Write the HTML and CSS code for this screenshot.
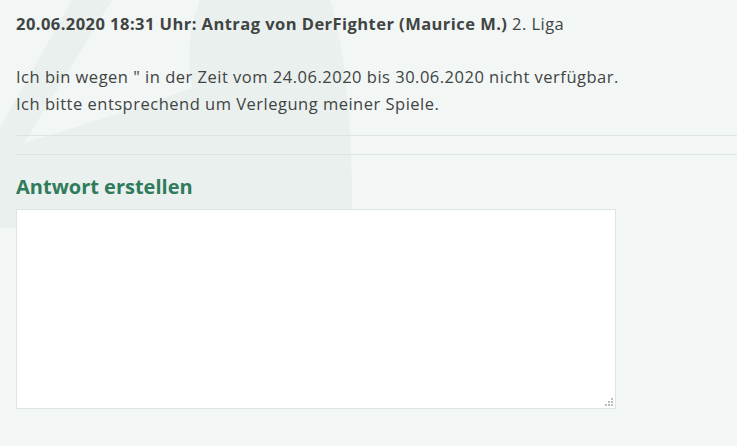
FILE: index.html
```html
<!DOCTYPE html>
<html lang="de">
<head>
<meta charset="utf-8">
<link rel="stylesheet" href="styles.css">
</head>
<body>
<svg class="watermark" width="420" height="300" viewBox="0 0 420 300" aria-hidden="true">
  <path d="M200,0 L330,0 Q352,70 352,212 L0,228 L0,150 Q110,118 192,88 Q184,40 200,0 Z" fill="#eaf0ee"/>
  <path d="M0,128 L72,0 L112,0 L0,182 Z" fill="#eaf0ee"/>
</svg>
<main class="content">
  <p class="meta"><strong>20.06.2020 18:31 Uhr: Antrag von DerFighter (Maurice M.)</strong> 2. Liga</p>
  <p class="message">Ich bin wegen " in der Zeit vom 24.06.2020 bis 30.06.2020 nicht verfügbar.<br>Ich bitte entsprechend um Verlegung meiner Spiele.</p>
  <hr class="rule">
  <hr class="rule">
  <h2 class="reply-title">Antwort erstellen</h2>
  <div class="reply-wrap">
    <textarea class="reply-box"></textarea>
    <span class="grip" aria-hidden="true"></span>
  </div>
</main>
</body>
</html>
```
FILE: styles.css
```css
html, body {
  margin: 0;
  padding: 0;
  background: #f2f6f5;
  height: 100%;
  overflow: hidden;
}
body {
  position: relative;
  font-family: "Open Sans", "Lato", sans-serif;
  color: #404443;
  font-size: 16.5px;
}
.watermark {
  position: absolute;
  left: 0;
  top: 0;
  z-index: 0;
}
.content {
  position: relative;
  z-index: 1;
  padding: 12px 0 0 16px;
  display: flex;
  flex-direction: column;
}
.meta {
  margin: 0;
  line-height: 24px;
  letter-spacing: 0.45px;
}
.meta strong { font-weight: 700; }
.message {
  margin: 27px 0 0;
  line-height: 27px;
  letter-spacing: 0.5px;
}
.rule {
  border: 0;
  border-top: 1px solid #dde5e2;
  margin: 0;
  width: 100%;
}
.rule:first-of-type { margin-top: 18px; }
.rule + .rule { margin-top: 18px; }
.reply-title {
  margin: 19px 0 0;
  font-size: 20px;
  line-height: 26px;
  font-weight: 700;
  color: #2f7b5c;
}
.reply-wrap {
  position: relative;
  margin-top: 9px;
  width: 600px;
  height: 200px;
}
.reply-box {
  display: block;
  width: 600px;
  height: 200px;
  margin: 0;
  box-sizing: border-box;
  border: 1px solid #dde5e2;
  background: #fff;
  resize: none;
  font-family: inherit;
  padding: 6px;
}
.grip {
  position: absolute;
  right: 3px;
  bottom: 3px;
  width: 8px;
  height: 8px;
  background:
    linear-gradient(#b9bebc, #b9bebc) 6px 0 / 2px 2px no-repeat,
    linear-gradient(#b9bebc, #b9bebc) 6px 3px / 2px 2px no-repeat,
    linear-gradient(#b9bebc, #b9bebc) 3px 3px / 2px 2px no-repeat,
    linear-gradient(#b9bebc, #b9bebc) 6px 6px / 2px 2px no-repeat,
    linear-gradient(#b9bebc, #b9bebc) 3px 6px / 2px 2px no-repeat,
    linear-gradient(#b9bebc, #b9bebc) 0 6px / 2px 2px no-repeat;
}
```
